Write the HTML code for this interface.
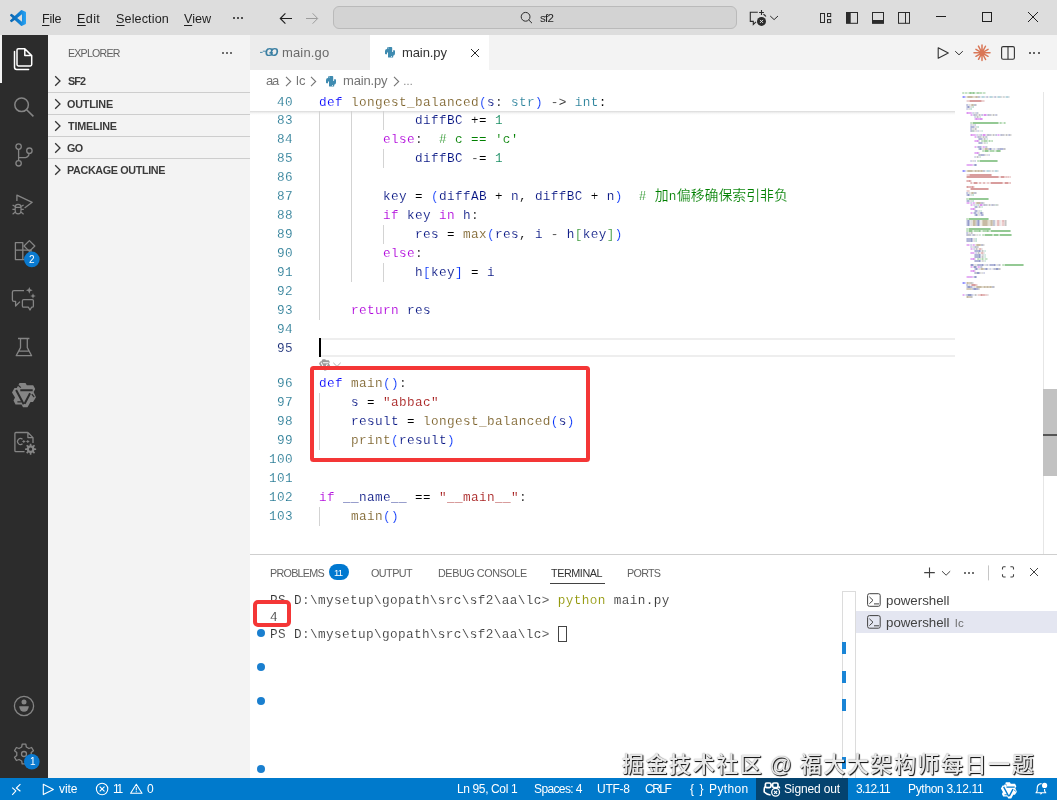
<!DOCTYPE html>
<html lang="zh">
<head>
<meta charset="utf-8">
<title>main.py - sf2 - Visual Studio Code</title>
<style>
*{box-sizing:border-box;margin:0;padding:0}
html,body{width:1057px;height:800px;overflow:hidden;background:#fff}
body{position:relative;font-family:"Liberation Sans","Noto Sans CJK SC",sans-serif;font-size:13px;color:#333}
.abs{position:absolute}
svg{position:absolute;overflow:visible}
.tx{position:absolute;white-space:pre}
.tl,.tx,.cl,#wm{will-change:transform}
.tx u{text-decoration-thickness:1px;text-underline-offset:1.5px}
#titlebar{left:0;top:0;width:1057px;height:35px;background:#dddddd}
#search{left:333px;top:6px;width:404px;height:23px;background:#d3d3d3;border:1px solid #bababa;border-radius:6px}
#activity{left:0;top:35px;width:48px;height:743px;background:#2c2c2c}
#sidebar{left:48px;top:35px;width:202px;height:743px;background:#f3f3f3}
.sep{position:absolute;left:48px;width:202px;height:1px;background:#cdcdcd}
#tabs{left:250px;top:35px;width:807px;height:35px;background:#f3f3f3}
#editor{left:250px;top:70px;width:807px;height:484px;background:#fff}
.cl{position:absolute;left:0;width:710px;height:19px;line-height:19px;font-family:"Liberation Mono","Noto Sans CJK SC",monospace;font-size:12.7px;letter-spacing:0.38px;white-space:pre;color:#000}
.cj{font-size:13.9px;letter-spacing:0}
.cl,.tl{-webkit-text-stroke:0.14px #fff;paint-order:fill stroke}
.ln{position:absolute;left:0;width:43px;text-align:right;color:#237893}
.ln.cur{color:#0b216f}
.cd{position:absolute;left:69px}
.k{color:#0000ff}.f{color:#795e26}.v{color:#001080}.t{color:#267f99}.c{color:#af00db}.n{color:#098658}.m{color:#008000}.s{color:#a31515}
.b1{color:#0431fa}.b2{color:#319331}.b3{color:#7b3814}
.ig{position:absolute;width:1px;background:#d3d3d3}
.red{position:absolute;border:4px solid #f43636;border-radius:3.5px}
#panel{left:250px;top:554px;width:807px;height:224px;background:#fff;border-top:1px solid #cfcfcf}
.tl{position:absolute;left:270px;height:17px;line-height:17px;font-family:"Liberation Mono",monospace;font-size:12.7px;letter-spacing:0.38px;white-space:pre;color:#333}
.dot{position:absolute;width:8px;height:8px;border-radius:50%;background:#1a7fcf}
.mark{position:absolute;left:842px;width:4px;height:12px;background:#1a85d6}
#status{left:0;top:778px;width:1057px;height:22px;background:#007acc}
.badge{position:absolute;background:#007acc;color:#fff;border-radius:50%;text-align:center;font-size:9px;font-weight:bold}
#wm{position:absolute;white-space:pre;color:#e9e9e9;font-family:"Liberation Sans","Noto Sans CJK SC",sans-serif;font-weight:500;text-shadow:1px 1px 1px rgba(0,0,0,0.85),0.5px 0.5px 0.5px rgba(0,0,0,0.5),0 0 1.2px rgba(0,0,0,0.45)}
</style>
</head>
<body>
<div id="titlebar" class="abs"></div>
<div id="search" class="abs"></div>
<span class="tx" style="left:42.27px;top:11.00px;font-size:12.6px;line-height:16px;letter-spacing:-0.303px;color:#1f1f1f;"><u>F</u>ile</span>
<span class="tx" style="left:77.17px;top:11.00px;font-size:12.6px;line-height:16px;letter-spacing:0.371px;color:#1f1f1f;"><u>E</u>dit</span>
<span class="tx" style="left:115.53px;top:11.00px;font-size:12.6px;line-height:16px;letter-spacing:0.120px;color:#1f1f1f;"><u>S</u>election</span>
<span class="tx" style="left:183.74px;top:11.00px;font-size:12.6px;line-height:16px;letter-spacing:-0.029px;color:#1f1f1f;"><u>V</u>iew</span>
<span class="tx" style="left:539.78px;top:10.00px;font-size:11.6px;line-height:16px;letter-spacing:-0.734px;color:#1f1f1f;">sf2</span>
<svg style="left:10px;top:10px" width="16" height="16" viewBox="0 0 100 100"><defs><linearGradient id="vsg" x1="0" x2="1" y1="0" y2="0"><stop offset="0" stop-color="#0b66b0"/><stop offset="0.55" stop-color="#0f7dd0"/><stop offset="1" stop-color="#2aa4f4"/></linearGradient></defs><path fill="url(#vsg)" fill-rule="evenodd" d="M96.46 10.8 75.86.88a6.23 6.23 0 0 0-7.1 1.2L29.35 38.04 12.18 25.01a4.16 4.16 0 0 0-5.32.24l-5.5 5.01a4.17 4.17 0 0 0 0 6.16L16.25 50 1.36 63.58a4.17 4.17 0 0 0 0 6.16l5.5 5.01a4.16 4.16 0 0 0 5.32.24l17.17-13.03 39.42 35.96a6.23 6.23 0 0 0 7.1 1.2l20.6-9.9A6.25 6.25 0 0 0 100 83.58V16.42a6.25 6.25 0 0 0-3.54-5.62zM75.02 72.7 45.11 50l29.91-22.7z"/></svg>
<svg style="left:0;top:0" width="1057" height="35" viewBox="0 0 1057 35" fill="none" stroke-linecap="butt">
<path d="M292 18.5H280.6M285.4 13.3 280.3 18.5 285.4 23.7" stroke="#1f1f1f" stroke-width="1.15"/>
<path d="M306 18.5H317.4M312.6 13.3 317.7 18.5 312.6 23.7" stroke="#9c9c9c" stroke-width="1"/>
<circle cx="525.6" cy="16.8" r="4.4" stroke="#2b2b2b" stroke-width="1"/><path d="M528.7 19.9 532 23.2" stroke="#2b2b2b" stroke-width="1"/>
<path d="M757.8 12.2H750.3V21.4H753.3V24.4L756 21.9" stroke="#2b2b2b" stroke-width="1.1"/>
<path d="M759.1 12.5H763.9M761.5 10.1V14.9" stroke="#2b2b2b" stroke-width="1.1"/>
<path d="M763.4 14.2Q765 15 765.9 16.6" stroke="#2b2b2b" stroke-width="1.1"/>
<circle cx="761.5" cy="21.4" r="4.5" fill="#2b2b2b"/><path d="M760 19.9 763 22.9M763 19.9 760 22.9" stroke="#e6e6e6" stroke-width="1"/>
<path d="M770.2 16 774.1 19.6 778 16" stroke="#2b2b2b" stroke-width="1"/>
<rect x="820.5" y="13.5" width="4" height="9" stroke="#2b2b2b"/><rect x="827.5" y="13.5" width="3.2" height="3" stroke="#2b2b2b"/><rect x="827.5" y="19.6" width="3.2" height="3" stroke="#2b2b2b"/>
<rect x="846.5" y="12.5" width="11" height="10.8" stroke="#2b2b2b"/><rect x="846.5" y="12.5" width="4.2" height="10.8" fill="#2b2b2b" stroke="none"/>
<rect x="872.5" y="12.5" width="11" height="10.8" stroke="#2b2b2b"/><rect x="872.5" y="20" width="11" height="3.4" fill="#2b2b2b" stroke="none"/>
<rect x="898.5" y="12.5" width="11" height="10.8" stroke="#2b2b2b"/><path d="M905.5 12.5V23.3" stroke="#2b2b2b"/>
<path d="M936 16.5H946" stroke="#1f1f1f" stroke-width="1"/>
<rect x="982.5" y="12.5" width="9" height="9" stroke="#1f1f1f" stroke-width="1"/>
<path d="M1028 12 1038 22M1038 12 1028 22" stroke="#1f1f1f" stroke-width="1"/>
</svg>
<div id="activity" class="abs"></div>
<div class="abs" style="left:0;top:35px;width:2px;height:48px;background:#f2f2f2"></div>
<svg style="left:0;top:0" width="48" height="778" viewBox="0 0 48 778" fill="none" stroke-linejoin="round">
<path d="M24.8 48.7H18.4Q17 48.7 17 50.1V64.6Q17 66 18.4 66H30.3Q31.7 66 31.7 64.6V55.6ZM24.8 48.7V55.6H31.7" stroke="#fff" stroke-width="1.5"/>
<path d="M14.5 51.5V67.3Q14.5 69.5 16.7 69.5H28.6" stroke="#fff" stroke-width="1.5" stroke-linecap="round"/>
<circle cx="21.6" cy="104.8" r="6.8" stroke="#858585" stroke-width="1.5"/><path d="M26.6 109.8 33.4 116.4" stroke="#858585" stroke-width="1.6"/>
<circle cx="18.6" cy="146.6" r="2.7" stroke="#858585" stroke-width="1.3"/><circle cx="18.6" cy="163.3" r="2.7" stroke="#858585" stroke-width="1.3"/><circle cx="29.4" cy="150.7" r="2.7" stroke="#858585" stroke-width="1.3"/>
<path d="M18.6 149.3V160.6M18.6 157.6H25.5Q28.6 157.2 29.2 153.4" stroke="#858585" stroke-width="1.3"/>
<path d="M16.9 201V195.2L32.2 202.3 24.6 208" stroke="#858585" stroke-width="1.3"/>
<path d="M15.2 207.2Q15.2 204.4 18.1 204.4Q21 204.4 21 207.2V210.7Q21 213.8 18.1 213.8Q15.2 213.8 15.2 210.7ZM15.2 207.4H21M12.4 209.3H15.2M21 209.3H23.8M12.6 204.9 15.2 206.6M23.6 204.9 21 206.6M12.6 214.2 15.3 212M23.6 214.2 20.9 212" stroke="#858585" stroke-width="1.2"/>
<path d="M15.4 242.6H22.8V250.2H15.4ZM15.4 250.2V259.6H22.8V250.2M22.8 250.2H31V259.6H22.8" stroke="#858585" stroke-width="1.3"/>
<path d="M29.4 240.6 34.8 246 29.4 251.4 24 246Z" stroke="#858585" stroke-width="1.3"/>
<circle cx="31.8" cy="259.4" r="7.8" fill="#0a7ad0" stroke="none"/>
<path d="M24 290.6H14Q12.4 290.6 12.4 292.2V299.8Q12.4 301.4 14 301.4H15.6V306L20 301.6" stroke="#858585" stroke-width="1.3"/>
<path d="M23.6 299.6H32.2Q33.4 299.6 33.4 300.8V306Q33.4 307.2 32.2 307.2H31.6L30 310 28.4 307.2H23.6Q22.4 307.2 22.4 306V300.8Q22.4 299.6 23.6 299.6Z" stroke="#858585" stroke-width="1.3"/>
<path d="M29.3 286.90000000000003L30.252000000000002 289.348 32.7 290.3 30.252000000000002 291.252 29.3 293.7 28.348 291.252 25.900000000000002 290.3 28.348 289.348ZM33 293.2L33.784 295.216 35.8 296 33.784 296.784 33 298.8 32.216 296.784 30.2 296 32.216 295.216Z" fill="#858585" stroke="none"/>
<path d="M18 338.5H29.4M20.5 338.5V347.6L16.2 355.7H31.6L27.3 347.6V338.5M18.4 351.2H29.4" stroke="#858585" stroke-width="1.3"/>
<path d="M19.5 382.9H25.5L26.8 385.3H33.2L35.2 389 33.6 392 36 397.2 33 402H30.5L27.5 407.3H23L21.5 404.5H15.5L13.5 400.6 15 397.6 12 392.5 14.5 388H16.8Z" fill="#858585" stroke="none" stroke-linejoin="round"/>
<path d="M20.3 390.3H32.7M16.1 390 23.7 404.2M30.1 393.3 24.6 403.8" stroke="#2c2c2c" stroke-width="2"/>
<path d="M18.2 385.2 20.8 387.6M31.8 394.2 34.2 397M17.4 401.8H21.6" stroke="#2c2c2c" stroke-width="1.2"/>
<path d="M27.9 432.5H15.9Q14.9 432.5 14.9 433.5V450.7Q14.9 451.7 15.9 451.7H24.5M27.9 432.5 33 437.6V443M27.9 432.5V437.6H33" stroke="#858585" stroke-width="1.3"/>
<path d="M22.5 439.2A3 3 0 1 0 22.5 443.8" stroke="#858585" stroke-width="1.2"/><path d="M22.3 441.5H25.3M23.8 440V443M26.3 441.5H29.3M27.8 440V443" stroke="#858585" stroke-width="0.9"/>
<path fill-rule="evenodd" d="M36.15 448.43L36.15 449.97L34.39 450.11L33.93 451.24L35.06 452.58L33.98 453.66L32.64 452.53L31.51 452.99L31.37 454.75L29.83 454.75L29.69 452.99L28.56 452.53L27.22 453.66L26.14 452.58L27.27 451.24L26.81 450.11L25.05 449.97L25.05 448.43L26.81 448.29L27.27 447.16L26.14 445.82L27.22 444.74L28.56 445.87L29.69 445.41L29.83 443.65L31.37 443.65L31.51 445.41L32.64 445.87L33.98 444.74L35.06 445.82L33.93 447.16L34.39 448.29ZM32.2 449.2A1.6 1.6 0 1 0 29 449.2A1.6 1.6 0 1 0 32.2 449.2Z" fill="#858585" stroke="none"/>
<circle cx="24" cy="706" r="9.6" stroke="#858585" stroke-width="1.3"/><circle cx="24" cy="702" r="2.5" fill="#858585"/><path d="M19.2 706.2H28.8A4.8 5.6 0 0 1 19.2 706.2Z" fill="#858585"/>
<path d="M33.43 757.34L31.60 760.49L28.95 759.50L26.29 761.04L25.82 763.83L22.18 763.83L21.71 761.04L19.05 759.50L16.40 760.49L14.57 757.34L16.76 755.54L16.76 752.46L14.57 750.66L16.40 747.51L19.05 748.50L21.71 746.96L22.18 744.17L25.82 744.17L26.29 746.96L28.95 748.50L31.60 747.51L33.43 750.66L31.24 752.46L31.24 755.54Z" stroke="#858585" stroke-width="1.3" stroke-linejoin="round"/><circle cx="24" cy="754" r="2.5" stroke="#858585" stroke-width="1.3"/>
<circle cx="31.8" cy="761.8" r="7.8" fill="#0a7ad0" stroke="none"/>
</svg>
<span class="tx" style="left:29.00px;top:252.00px;font-size:10px;line-height:16px;color:#fff;">2</span>
<span class="tx" style="left:29.54px;top:754.00px;font-size:10px;line-height:16px;color:#fff;">1</span>
<div id="sidebar" class="abs"></div>
<span class="tx" style="left:67.63px;top:45.00px;font-size:10.6px;line-height:16px;letter-spacing:-0.767px;color:#616161;">EXPLORER</span>
<span class="tx" style="left:67.59px;top:73.00px;font-size:10.8px;line-height:16px;letter-spacing:-0.882px;color:#3b3b3b;font-weight:700;">SF2</span>
<svg style="left:54px;top:75.4px" width="8" height="12" viewBox="0 0 8 12"><path d="M1.2 1.2 L6 6 L1.2 10.8" fill="none" stroke="#333" stroke-width="1.3"/></svg>
<span class="tx" style="left:67.46px;top:96.00px;font-size:10.8px;line-height:16px;letter-spacing:-0.205px;color:#3b3b3b;font-weight:700;">OUTLINE</span>
<svg style="left:54px;top:98.4px" width="8" height="12" viewBox="0 0 8 12"><path d="M1.2 1.2 L6 6 L1.2 10.8" fill="none" stroke="#333" stroke-width="1.3"/></svg>
<span class="tx" style="left:68.38px;top:118.00px;font-size:10.8px;line-height:16px;letter-spacing:-0.194px;color:#3b3b3b;font-weight:700;">TIMELINE</span>
<svg style="left:54px;top:120.4px" width="8" height="12" viewBox="0 0 8 12"><path d="M1.2 1.2 L6 6 L1.2 10.8" fill="none" stroke="#333" stroke-width="1.3"/></svg>
<span class="tx" style="left:67.46px;top:140.00px;font-size:10.8px;line-height:16px;letter-spacing:-0.605px;color:#3b3b3b;font-weight:700;">GO</span>
<svg style="left:54px;top:142.4px" width="8" height="12" viewBox="0 0 8 12"><path d="M1.2 1.2 L6 6 L1.2 10.8" fill="none" stroke="#333" stroke-width="1.3"/></svg>
<span class="tx" style="left:67.18px;top:162.00px;font-size:10.8px;line-height:16px;letter-spacing:-0.369px;color:#3b3b3b;font-weight:700;">PACKAGE OUTLINE</span>
<svg style="left:54px;top:164.4px" width="8" height="12" viewBox="0 0 8 12"><path d="M1.2 1.2 L6 6 L1.2 10.8" fill="none" stroke="#333" stroke-width="1.3"/></svg>
<div class="sep" style="top:92px"></div>
<div class="sep" style="top:114px"></div>
<div class="sep" style="top:136px"></div>
<div class="sep" style="top:158px"></div>
<div class="abs" style="left:221.90px;top:52.30px;width:2.0px;height:2.0px;border-radius:50%;background:#424242"></div><div class="abs" style="left:225.85px;top:52.30px;width:2.0px;height:2.0px;border-radius:50%;background:#424242"></div><div class="abs" style="left:229.80px;top:52.30px;width:2.0px;height:2.0px;border-radius:50%;background:#424242"></div>
<div class="abs" style="left:232.90px;top:17.00px;width:2.0px;height:2.0px;border-radius:50%;background:#1f1f1f"></div><div class="abs" style="left:237.15px;top:17.00px;width:2.0px;height:2.0px;border-radius:50%;background:#1f1f1f"></div><div class="abs" style="left:241.40px;top:17.00px;width:2.0px;height:2.0px;border-radius:50%;background:#1f1f1f"></div>
<div id="tabs" class="abs"></div>
<div class="abs" style="left:250px;top:35px;width:120px;height:35px;background:#ececec"></div>
<div class="abs" style="left:370px;top:35px;width:119px;height:35px;background:#fff"></div>
<span class="tx" style="left:281.74px;top:45.00px;font-size:13px;line-height:16px;letter-spacing:0.143px;color:#6a6a6a;">main.go</span>
<span class="tx" style="left:401.74px;top:45.00px;font-size:13px;line-height:16px;letter-spacing:-0.105px;color:#333;">main.py</span>
<svg style="left:385px;top:47px" width="10.0" height="10.75" viewBox="385 47 10 10.75"><path d="M387.6 47H391.4Q392.2 47 392.2 47.8V52H393.1V50.2H394.4Q395 50.2 395 50.8V53.6Q395 55.6 393.2 55.7V56.9Q393.2 57.6 392.5 57.6H388.7Q388 57.6 388 56.9V52.6H387V54.2H385.6Q385 54.2 385 53.6V51Q385 49.2 387 49Z" fill="#3f8bb0"/><circle cx="391.5" cy="56.5" r="0.5" fill="#fff"/><circle cx="388.6" cy="48" r="0.45" fill="#fff"/></svg>
<span class="tx" style="left:265.47px;top:44.00px;font-size:10.6px;line-height:16px;letter-spacing:-3.310px;color:#3a7fa3;font-weight:700;font-style:italic;-webkit-text-stroke:0.12px #3a7fa3;">GO</span>
<svg style="left:0;top:35px" width="1057" height="35" viewBox="0 35 1057 35" fill="none">
<path d="M260 52.4H262.6M262.8 51.2H266.2" stroke="#3a7fa3" stroke-width="0.9"/>
<path d="M471 49 479 57M479 49 471 57" stroke="#2a2a2a" stroke-width="1"/>
<path d="M938.2 47.7V58.3L948.3 53Z" stroke="#333" stroke-width="1.1" stroke-linejoin="round"/>
<path d="M955.2 51.2 959 54.8 962.8 51.2" stroke="#333" stroke-width="1"/>
<path d="M983.00 52.80L990.00 52.80M982.87 53.30L988.06 56.30M982.47 53.68L985.57 59.51M982.00 53.80L982.00 60.60M981.53 53.68L978.53 59.33M981.13 53.30L975.94 56.30M981.00 52.80L974.00 52.80M981.13 52.30L975.94 49.30M981.53 51.92L978.43 46.09M982.00 51.80L982.00 45.00M982.47 51.92L985.47 46.27M982.87 52.30L988.06 49.30" stroke="#d97757" stroke-width="1.5" stroke-linecap="round"/><circle cx="982" cy="52.8" r="2" fill="#d97757"/>
<rect x="1001.6" y="46.6" width="12.8" height="12.6" rx="1.5" stroke="#333" stroke-width="1.1"/><path d="M1008 46.6V59.2" stroke="#333" stroke-width="1.1"/>
</svg>
<div class="abs" style="left:1028.50px;top:51.95px;width:2.1px;height:2.1px;border-radius:50%;background:#333"></div><div class="abs" style="left:1033.05px;top:51.95px;width:2.1px;height:2.1px;border-radius:50%;background:#333"></div><div class="abs" style="left:1037.60px;top:51.95px;width:2.1px;height:2.1px;border-radius:50%;background:#333"></div>
<div id="editor" class="abs">
</div>
<span class="tx" style="left:266.15px;top:73.00px;font-size:13px;line-height:16px;letter-spacing:-1.208px;color:#757575;">aa</span>
<span class="tx" style="left:295.92px;top:73.00px;font-size:13px;line-height:16px;letter-spacing:0.031px;color:#757575;">lc</span>
<span class="tx" style="left:342.84px;top:73.00px;font-size:13px;line-height:16px;letter-spacing:-0.155px;color:#757575;">main.py</span>
<svg style="left:285.4px;top:75.5px" width="7" height="11" viewBox="0 0 7 11"><path d="M1 0.8 L5.7 5.5 L1 10.2" fill="none" stroke="#757575" stroke-width="1.1"/></svg>
<svg style="left:310px;top:75.5px" width="7" height="11" viewBox="0 0 7 11"><path d="M1 0.8 L5.7 5.5 L1 10.2" fill="none" stroke="#757575" stroke-width="1.1"/></svg>
<svg style="left:392.9px;top:75.5px" width="7" height="11" viewBox="0 0 7 11"><path d="M1 0.8 L5.7 5.5 L1 10.2" fill="none" stroke="#757575" stroke-width="1.1"/></svg>
<span class="tx" style="left:403.34px;top:74.00px;font-size:10px;line-height:16px;color:#757575;">…</span>
<svg style="left:326px;top:76.3px" width="10.0" height="10.75" viewBox="385 47 10 10.75"><path d="M387.6 47H391.4Q392.2 47 392.2 47.8V52H393.1V50.2H394.4Q395 50.2 395 50.8V53.6Q395 55.6 393.2 55.7V56.9Q393.2 57.6 392.5 57.6H388.7Q388 57.6 388 56.9V52.6H387V54.2H385.6Q385 54.2 385 53.6V51Q385 49.2 387 49Z" fill="#3f8bb0"/><circle cx="391.5" cy="56.5" r="0.5" fill="#fff"/><circle cx="388.6" cy="48" r="0.45" fill="#fff"/></svg>
<div id="code" class="abs" style="left:250px;top:70.7px;width:710px;height:484px">
<div class="cl" style="top:22px"><span class="ln">40</span><span class="cd"><span class="k">def</span> <span class="f">longest_balanced</span><span class="b1">(</span><span class="v">s</span>: <span class="t">str</span><span class="b1">)</span> -&gt; <span class="t">int</span>:</span></div>
<div class="abs" style="left:0;top:40.3px;width:705px;height:4px;background:linear-gradient(#d9d9d9,#f4f4f4 50%,#fff)"></div>
<div class="abs" style="left:69px;top:267.3px;width:636px;height:19px;border-top:2px solid #eeeeee;border-bottom:2px solid #eeeeee"></div>
<div class="abs" style="left:69px;top:267.3px;width:2px;height:19px;background:#000"></div>
<div class="cl" style="top:40px"><span class="ln">83</span><i class="ig" style="left:69px;top:0;height:19px"></i><i class="ig" style="left:101px;top:0;height:19px"></i><i class="ig" style="left:133px;top:0;height:19px"></i><span class="cd">            <span class="v">diffBC</span> += <span class="n">1</span></span></div>
<div class="cl" style="top:59px"><span class="ln">84</span><i class="ig" style="left:69px;top:0;height:19px"></i><i class="ig" style="left:101px;top:0;height:19px"></i><span class="cd">        <span class="c">else</span>:  <span class="m"># c == &#x27;c&#x27;</span></span></div>
<div class="cl" style="top:78px"><span class="ln">85</span><i class="ig" style="left:69px;top:0;height:19px"></i><i class="ig" style="left:101px;top:0;height:19px"></i><i class="ig" style="left:133px;top:0;height:19px"></i><span class="cd">            <span class="v">diffBC</span> -= <span class="n">1</span></span></div>
<div class="cl" style="top:97px"><span class="ln">86</span><i class="ig" style="left:69px;top:0;height:19px"></i><i class="ig" style="left:101px;top:0;height:19px"></i><span class="cd"></span></div>
<div class="cl" style="top:116px"><span class="ln">87</span><i class="ig" style="left:69px;top:0;height:19px"></i><i class="ig" style="left:101px;top:0;height:19px"></i><span class="cd">        <span class="v">key</span> = <span class="b1">(</span><span class="v">diffAB</span> + <span class="v">n</span>, <span class="v">diffBC</span> + <span class="v">n</span><span class="b1">)</span>  <span class="m"># <span class="cj">加</span>n<span class="cj">偏移确保索引非负</span></span></span></div>
<div class="cl" style="top:135px"><span class="ln">88</span><i class="ig" style="left:69px;top:0;height:19px"></i><i class="ig" style="left:101px;top:0;height:19px"></i><span class="cd">        <span class="c">if</span> <span class="v">key</span> <span class="c">in</span> <span class="v">h</span>:</span></div>
<div class="cl" style="top:154px"><span class="ln">89</span><i class="ig" style="left:69px;top:0;height:19px"></i><i class="ig" style="left:101px;top:0;height:19px"></i><i class="ig" style="left:133px;top:0;height:19px"></i><span class="cd">            <span class="v">res</span> = <span class="f">max</span><span class="b1">(</span><span class="v">res</span>, <span class="v">i</span> - <span class="v">h</span><span class="b2">[</span><span class="v">key</span><span class="b2">]</span><span class="b1">)</span></span></div>
<div class="cl" style="top:173px"><span class="ln">90</span><i class="ig" style="left:69px;top:0;height:19px"></i><i class="ig" style="left:101px;top:0;height:19px"></i><span class="cd">        <span class="c">else</span>:</span></div>
<div class="cl" style="top:192px"><span class="ln">91</span><i class="ig" style="left:69px;top:0;height:19px"></i><i class="ig" style="left:101px;top:0;height:19px"></i><i class="ig" style="left:133px;top:0;height:19px"></i><span class="cd">            <span class="v">h</span><span class="b1">[</span><span class="v">key</span><span class="b1">]</span> = <span class="v">i</span></span></div>
<div class="cl" style="top:211px"><span class="ln">92</span><i class="ig" style="left:69px;top:0;height:19px"></i><span class="cd"></span></div>
<div class="cl" style="top:230px"><span class="ln">93</span><i class="ig" style="left:69px;top:0;height:19px"></i><span class="cd">    <span class="c">return</span> <span class="v">res</span></span></div>
<div class="cl" style="top:249px"><span class="ln">94</span><span class="cd"></span></div>
<div class="cl" style="top:268px"><span class="ln cur">95</span><span class="cd"></span></div>
<div class="cl" style="top:303px"><span class="ln">96</span><span class="cd"><span class="k">def</span> <span class="f">main</span><span class="b1">()</span>:</span></div>
<div class="cl" style="top:322px"><span class="ln">97</span><i class="ig" style="left:69px;top:0;height:19px"></i><span class="cd">    <span class="v">s</span> = <span class="s">&quot;abbac&quot;</span></span></div>
<div class="cl" style="top:341px"><span class="ln">98</span><i class="ig" style="left:69px;top:0;height:19px"></i><span class="cd">    <span class="v">result</span> = <span class="f">longest_balanced</span><span class="b1">(</span><span class="v">s</span><span class="b1">)</span></span></div>
<div class="cl" style="top:360px"><span class="ln">99</span><i class="ig" style="left:69px;top:0;height:19px"></i><span class="cd">    <span class="f">print</span><span class="b1">(</span><span class="v">result</span><span class="b1">)</span></span></div>
<div class="cl" style="top:379px"><span class="ln">100</span><span class="cd"></span></div>
<div class="cl" style="top:398px"><span class="ln">101</span><span class="cd"></span></div>
<div class="cl" style="top:417px"><span class="ln">102</span><span class="cd"><span class="c">if</span> <span class="v">__name__</span> == <span class="s">&quot;__main__&quot;</span>:</span></div>
<div class="cl" style="top:436px"><span class="ln">103</span><i class="ig" style="left:69px;top:0;height:19px"></i><span class="cd">    <span class="f">main</span><span class="b1">()</span></span></div>

</div>
<svg style="left:310px;top:355px" width="40" height="20" viewBox="310 355 40 20" fill="none"><g transform="translate(324.6 364.8) scale(0.46) translate(-24 -395)"><path d="M19.5 382.9H25.5L26.8 385.3H33.2L35.2 389 33.6 392 36 397.2 33 402H30.5L27.5 407.3H23L21.5 404.5H15.5L13.5 400.6 15 397.6 12 392.5 14.5 388H16.8Z" fill="#9b9b9b"/><path d="M20.3 390.3H32.7M16.1 390 23.7 404.2M30.1 393.3 24.6 403.8" stroke="#fff" stroke-width="2.2"/></g><path d="M333.3 362.8 337 366.4 340.7 362.8" stroke="#a5a5a5" stroke-width="0.9"/></svg>
<div class="red" style="left:310px;top:366px;width:280px;height:96px"></div>
<svg style="left:0;top:0" width="1057" height="560" viewBox="0 0 1057 560" fill="none">
<path d="M964.6 97h0.9M964.6 171h0.9M964.6 283h0.9" stroke="#8c8cff" stroke-width="1.7"/>
<path d="M962.6 97h0.9M963.6 97h0.9M962.6 171h0.9M963.6 171h0.9M962.6 283h0.9M963.6 283h0.9" stroke="#6161ff" stroke-width="1.7"/>
<path d="M965.6 295h0.9M966.6 295h0.9M971.6 295h0.9M972.6 295h0.9" stroke="#b8bcdb" stroke-width="1.7"/>
<path d="M966.6 107h0.9M966.6 109h0.9M972.6 113h0.9M975.6 115h0.9M989.6 115h0.9M974.6 117h0.9M970.6 125h0.9M974.6 125h0.9M971.6 127h0.9M972.6 127h0.9M973.6 127h0.9M977.6 131h0.9M976.6 135h0.9M989.6 135h0.9M1002.6 135h0.9M979.6 137h0.9M979.6 139h0.9M980.6 139h0.9M981.6 139h0.9M979.6 143h0.9M980.6 143h0.9M981.6 143h0.9M978.6 147h0.9M979.6 147h0.9M980.6 147h0.9M978.6 149h0.9M988.6 149h0.9M993.6 149h0.9M1000.6 149h0.9M1001.6 149h0.9M1002.6 149h0.9M981.6 155h0.9M982.6 155h0.9M983.6 155h0.9M988.6 155h0.9M974.6 157h0.9M970.6 161h0.9M974.6 161h0.9M973.6 165h0.9M966.6 195h0.9M966.6 201h0.9M968.6 201h0.9M970.6 203h0.9M973.6 205h0.9M985.6 205h0.9M993.6 205h0.9M974.6 207h0.9M976.6 207h0.9M974.6 211h0.9M976.6 211h0.9M973.6 213h0.9M975.6 213h0.9M979.6 213h0.9M974.6 215h0.9M980.6 215h0.9M982.6 215h0.9M966.6 221h0.9M976.6 221h0.9M966.6 223h0.9M976.6 223h0.9M966.6 225h0.9M976.6 225h0.9M967.6 239h0.9M968.6 239h0.9M969.6 239h0.9M967.6 241h0.9M968.6 241h0.9M969.6 241h0.9M970.6 245h0.9M970.6 247h0.9M976.6 247h0.9M973.6 249h0.9M975.6 251h0.9M976.6 251h0.9M977.6 251h0.9M975.6 253h0.9M975.6 255h0.9M976.6 255h0.9M977.6 255h0.9M975.6 257h0.9M976.6 257h0.9M977.6 257h0.9M975.6 261h0.9M976.6 261h0.9M977.6 261h0.9M978.6 265h0.9M979.6 265h0.9M980.6 265h0.9M990.6 265h0.9M991.6 265h0.9M992.6 265h0.9M974.6 269h0.9M984.6 269h0.9M989.6 269h0.9M983.6 273h0.9M973.6 277h0.9M966.6 287h0.9M970.6 287h0.9M971.6 287h0.9M972.6 289h0.9M976.6 289h0.9M977.6 289h0.9" stroke="#8c93c6" stroke-width="1.7"/>
<path d="M978.6 97h0.9M986.6 97h0.9M994.6 97h0.9M966.6 105h0.9M974.6 105h0.9M967.6 107h0.9M968.6 107h0.9M976.6 113h0.9M973.6 115h0.9M981.6 115h0.9M987.6 115h0.9M995.6 115h0.9M970.6 127h0.9M970.6 129h0.9M970.6 131h0.9M980.6 135h0.9M987.6 135h0.9M995.6 135h0.9M1000.6 135h0.9M1008.6 135h0.9M977.6 137h0.9M985.6 137h0.9M978.6 139h0.9M978.6 143h0.9M977.6 147h0.9M985.6 147h0.9M979.6 149h0.9M980.6 149h0.9M989.6 149h0.9M990.6 149h0.9M997.6 149h0.9M999.6 149h0.9M978.6 155h0.9M980.6 155h0.9M974.6 165h0.9M975.6 165h0.9M983.6 171h0.9M966.6 193h0.9M974.6 193h0.9M967.6 195h0.9M968.6 195h0.9M967.6 201h0.9M981.6 203h0.9M983.6 205h0.9M991.6 205h0.9M975.6 207h0.9M975.6 211h0.9M974.6 213h0.9M980.6 213h0.9M981.6 213h0.9M975.6 215h0.9M976.6 215h0.9M981.6 215h0.9M967.6 221h0.9M968.6 221h0.9M977.6 221h0.9M978.6 221h0.9M993.6 221h0.9M967.6 223h0.9M968.6 223h0.9M977.6 223h0.9M978.6 223h0.9M993.6 223h0.9M967.6 225h0.9M968.6 225h0.9M977.6 225h0.9M978.6 225h0.9M993.6 225h0.9M966.6 233h0.9M966.6 235h0.9M969.6 235h0.9M972.6 235h0.9M966.6 239h0.9M970.6 239h0.9M971.6 239h0.9M966.6 241h0.9M970.6 241h0.9M971.6 241h0.9M981.6 245h0.9M974.6 247h0.9M974.6 251h0.9M978.6 251h0.9M979.6 251h0.9M974.6 255h0.9M978.6 255h0.9M979.6 255h0.9M974.6 257h0.9M978.6 257h0.9M979.6 257h0.9M974.6 261h0.9M978.6 261h0.9M979.6 261h0.9M970.6 265h0.9M971.6 265h0.9M972.6 265h0.9M977.6 265h0.9M981.6 265h0.9M982.6 265h0.9M986.6 265h0.9M989.6 265h0.9M993.6 265h0.9M994.6 265h0.9M998.6 265h0.9M973.6 267h0.9M974.6 267h0.9M975.6 267h0.9M980.6 267h0.9M975.6 269h0.9M976.6 269h0.9M985.6 269h0.9M986.6 269h0.9M993.6 269h0.9M995.6 269h0.9M996.6 269h0.9M997.6 269h0.9M974.6 273h0.9M976.6 273h0.9M977.6 273h0.9M978.6 273h0.9M974.6 277h0.9M975.6 277h0.9M966.6 285h0.9M967.6 287h0.9M968.6 287h0.9M969.6 287h0.9M992.6 287h0.9M973.6 289h0.9M974.6 289h0.9M975.6 289h0.9M967.6 295h0.9M968.6 295h0.9M969.6 295h0.9M970.6 295h0.9" stroke="#616bb0" stroke-width="1.7"/>
<path d="M964.6 93h0.9M966.6 93h0.9M974.6 93h0.9M979.6 93h0.9M982.6 93h0.9M984.6 93h0.9M1001.6 123h0.9M980.6 231h0.9M984.6 259h0.9M986.6 259h0.9" stroke="#b8dbb8" stroke-width="1.7"/>
<path d="M965.6 93h0.9M968.6 93h0.9M971.6 93h0.9M977.6 93h0.9M978.6 93h0.9M983.6 93h0.9M999.6 123h0.9M1000.6 123h0.9M1003.6 123h0.9M1004.6 123h0.9M984.6 141h0.9M985.6 141h0.9M986.6 141h0.9M988.6 141h0.9M989.6 141h0.9M989.6 151h0.9M990.6 151h0.9M991.6 151h0.9M993.6 151h0.9M995.6 151h0.9M973.6 231h0.9M975.6 231h0.9M976.6 231h0.9M977.6 231h0.9M983.6 231h0.9M984.6 231h0.9M985.6 231h0.9M988.6 231h0.9M979.6 259h0.9M981.6 259h0.9M982.6 259h0.9M985.6 259h0.9" stroke="#8cc68c" stroke-width="1.7"/>
<path d="M962.6 93h0.9M969.6 93h0.9M970.6 93h0.9M972.6 93h0.9M973.6 93h0.9M976.6 93h0.9M980.6 93h0.9M970.6 123h0.9M972.6 123h0.9M973.6 123h0.9M974.6 123h0.9M975.6 123h0.9M976.6 123h0.9M977.6 123h0.9M978.6 123h0.9M979.6 123h0.9M980.6 123h0.9M981.6 123h0.9M982.6 123h0.9M983.6 123h0.9M984.6 123h0.9M985.6 123h0.9M986.6 123h0.9M987.6 123h0.9M988.6 123h0.9M989.6 123h0.9M990.6 123h0.9M991.6 123h0.9M992.6 123h0.9M993.6 123h0.9M994.6 123h0.9M995.6 123h0.9M996.6 123h0.9M997.6 123h0.9M981.6 141h0.9M983.6 141h0.9M991.6 141h0.9M982.6 151h0.9M984.6 151h0.9M985.6 151h0.9M986.6 151h0.9M987.6 151h0.9M992.6 151h0.9M996.6 151h0.9M997.6 151h0.9M998.6 151h0.9M999.6 151h0.9M977.6 161h0.9M979.6 161h0.9M980.6 161h0.9M981.6 161h0.9M982.6 161h0.9M983.6 161h0.9M984.6 161h0.9M985.6 161h0.9M986.6 161h0.9M987.6 161h0.9M988.6 161h0.9M989.6 161h0.9M990.6 161h0.9M991.6 161h0.9M992.6 161h0.9M993.6 161h0.9M994.6 161h0.9M995.6 161h0.9M996.6 161h0.9M966.6 199h0.9M968.6 199h0.9M969.6 199h0.9M970.6 199h0.9M971.6 199h0.9M972.6 199h0.9M973.6 199h0.9M974.6 199h0.9M975.6 199h0.9M976.6 199h0.9M977.6 199h0.9M978.6 199h0.9M979.6 199h0.9M980.6 199h0.9M981.6 199h0.9M982.6 199h0.9M983.6 199h0.9M984.6 199h0.9M985.6 199h0.9M986.6 199h0.9M987.6 199h0.9M966.6 219h0.9M968.6 219h0.9M969.6 219h0.9M970.6 219h0.9M971.6 219h0.9M972.6 219h0.9M973.6 219h0.9M974.6 219h0.9M975.6 219h0.9M976.6 219h0.9M977.6 219h0.9M978.6 219h0.9M979.6 219h0.9M980.6 219h0.9M981.6 219h0.9M982.6 219h0.9M983.6 219h0.9M984.6 219h0.9M985.6 219h0.9M986.6 219h0.9M987.6 219h0.9M966.6 229h0.9M968.6 229h0.9M969.6 229h0.9M970.6 229h0.9M971.6 229h0.9M972.6 229h0.9M973.6 229h0.9M974.6 229h0.9M975.6 229h0.9M976.6 229h0.9M977.6 229h0.9M978.6 229h0.9M979.6 229h0.9M980.6 229h0.9M981.6 229h0.9M982.6 229h0.9M983.6 229h0.9M984.6 229h0.9M985.6 229h0.9M986.6 229h0.9M987.6 229h0.9M988.6 229h0.9M989.6 229h0.9M966.6 231h0.9M968.6 231h0.9M969.6 231h0.9M970.6 231h0.9M971.6 231h0.9M974.6 231h0.9M978.6 231h0.9M979.6 231h0.9M982.6 231h0.9M986.6 231h0.9M987.6 231h0.9M990.6 231h0.9M991.6 231h0.9M992.6 231h0.9M993.6 231h0.9M994.6 231h0.9M995.6 231h0.9M996.6 231h0.9M997.6 231h0.9M998.6 231h0.9M999.6 231h0.9M1000.6 231h0.9M1001.6 231h0.9M1002.6 231h0.9M1003.6 231h0.9M1004.6 231h0.9M1005.6 231h0.9M1006.6 231h0.9M1007.6 231h0.9M1008.6 231h0.9M1009.6 231h0.9M982.6 235h0.9M984.6 235h0.9M985.6 235h0.9M986.6 235h0.9M987.6 235h0.9M988.6 235h0.9M989.6 235h0.9M990.6 235h0.9M991.6 235h0.9M993.6 235h0.9M994.6 235h0.9M995.6 235h0.9M996.6 235h0.9M997.6 235h0.9M999.6 235h0.9M1000.6 235h0.9M1001.6 235h0.9M1002.6 235h0.9M1003.6 235h0.9M1004.6 235h0.9M1005.6 235h0.9M1006.6 235h0.9M1007.6 235h0.9M1008.6 235h0.9M1009.6 235h0.9M1010.6 235h0.9M977.6 259h0.9M1002.6 265h0.9M1004.6 265h0.9M1005.6 265h0.9M1006.6 265h0.9M1007.6 265h0.9M1008.6 265h0.9M1009.6 265h0.9M1010.6 265h0.9M1011.6 265h0.9M1012.6 265h0.9M1013.6 265h0.9M1014.6 265h0.9M1015.6 265h0.9M1016.6 265h0.9M1017.6 265h0.9M1018.6 265h0.9M1019.6 265h0.9M1020.6 265h0.9M1021.6 265h0.9M1022.6 265h0.9" stroke="#61b061" stroke-width="1.7"/>
<path d="M979.6 117h0.9M981.6 131h0.9M986.6 139h0.9M986.6 143h0.9M979.6 157h0.9M995.6 205h0.9M981.6 207h0.9M980.6 211h0.9M979.6 235h0.9M984.6 251h0.9M984.6 255h0.9M984.6 257h0.9M984.6 261h0.9" stroke="#90c9b4" stroke-width="1.7"/>
<path d="M972.6 107h0.9M970.6 109h0.9M977.6 127h0.9M972.6 131h0.9M972.6 195h0.9M972.6 201h0.9M977.6 205h0.9M975.6 239h0.9M975.6 241h0.9" stroke="#66b497" stroke-width="1.7"/>
<path d="M979.6 97h0.9M984.6 97h0.9M987.6 97h0.9M992.6 97h0.9M995.6 97h0.9M1002.6 97h0.9M1008.6 97h0.9M977.6 113h0.9M996.6 115h0.9M979.6 131h0.9M1010.6 135h0.9M986.6 137h0.9M978.6 141h0.9M983.6 143h0.9M986.6 147h0.9M991.6 149h0.9M995.6 149h0.9M978.6 153h0.9M984.6 171h0.9M991.6 171h0.9M997.6 171h0.9M983.6 203h0.9M994.6 205h0.9M997.6 205h0.9M974.6 209h0.9M982.6 213h0.9M979.6 221h0.9M994.6 221h0.9M999.6 221h0.9M979.6 223h0.9M994.6 223h0.9M999.6 223h0.9M979.6 225h0.9M994.6 225h0.9M999.6 225h0.9M970.6 235h0.9M978.6 235h0.9M983.6 245h0.9M981.6 249h0.9M983.6 253h0.9M981.6 255h0.9M974.6 259h0.9M981.6 261h0.9M987.6 265h0.9M981.6 267h0.9M987.6 269h0.9M991.6 269h0.9M974.6 271h0.9M972.6 283h0.9M987.6 295h0.9" stroke="#cacaca" stroke-width="1.7"/>
<path d="M977.6 97h0.9M1000.6 97h0.9M1003.6 97h0.9M968.6 105h0.9M973.6 105h0.9M975.6 105h0.9M970.6 107h0.9M968.6 109h0.9M974.6 113h0.9M974.6 115h0.9M976.6 115h0.9M978.6 115h0.9M979.6 115h0.9M988.6 115h0.9M990.6 115h0.9M992.6 115h0.9M993.6 115h0.9M976.6 117h0.9M977.6 117h0.9M972.6 125h0.9M975.6 127h0.9M972.6 129h0.9M974.6 129h0.9M975.6 129h0.9M971.6 131h0.9M973.6 131h0.9M975.6 131h0.9M978.6 135h0.9M986.6 135h0.9M988.6 135h0.9M990.6 135h0.9M992.6 135h0.9M993.6 135h0.9M1001.6 135h0.9M1003.6 135h0.9M1005.6 135h0.9M1006.6 135h0.9M1009.6 135h0.9M978.6 137h0.9M980.6 137h0.9M982.6 137h0.9M983.6 137h0.9M983.6 139h0.9M984.6 139h0.9M984.6 143h0.9M982.6 149h0.9M987.6 149h0.9M998.6 149h0.9M1003.6 149h0.9M1004.6 149h0.9M979.6 155h0.9M984.6 155h0.9M986.6 155h0.9M976.6 157h0.9M977.6 157h0.9M972.6 161h0.9M982.6 171h0.9M989.6 171h0.9M992.6 171h0.9M968.6 193h0.9M973.6 193h0.9M975.6 193h0.9M970.6 195h0.9M970.6 201h0.9M980.6 203h0.9M982.6 203h0.9M975.6 205h0.9M984.6 205h0.9M986.6 205h0.9M988.6 205h0.9M989.6 205h0.9M992.6 205h0.9M996.6 205h0.9M978.6 207h0.9M979.6 207h0.9M978.6 211h0.9M977.6 213h0.9M978.6 215h0.9M970.6 221h0.9M975.6 221h0.9M992.6 221h0.9M1004.6 221h0.9M1005.6 221h0.9M970.6 223h0.9M975.6 223h0.9M992.6 223h0.9M1004.6 223h0.9M1005.6 223h0.9M970.6 225h0.9M975.6 225h0.9M992.6 225h0.9M1004.6 225h0.9M1005.6 225h0.9M968.6 233h0.9M970.6 233h0.9M971.6 233h0.9M967.6 235h0.9M968.6 235h0.9M973.6 235h0.9M974.6 235h0.9M976.6 235h0.9M973.6 239h0.9M973.6 241h0.9M980.6 245h0.9M982.6 245h0.9M972.6 247h0.9M975.6 247h0.9M977.6 247h0.9M975.6 249h0.9M976.6 249h0.9M981.6 251h0.9M982.6 251h0.9M977.6 253h0.9M978.6 253h0.9M982.6 255h0.9M981.6 257h0.9M982.6 257h0.9M982.6 261h0.9M974.6 265h0.9M976.6 265h0.9M984.6 265h0.9M996.6 265h0.9M999.6 265h0.9M978.6 269h0.9M983.6 269h0.9M994.6 269h0.9M998.6 269h0.9M999.6 269h0.9M975.6 273h0.9M979.6 273h0.9M981.6 273h0.9M970.6 283h0.9M971.6 283h0.9M968.6 285h0.9M973.6 287h0.9M991.6 287h0.9M993.6 287h0.9M971.6 289h0.9M978.6 289h0.9M974.6 295h0.9M975.6 295h0.9M970.6 297h0.9M971.6 297h0.9" stroke="#aaaaaa" stroke-width="1.7"/>
<path d="M982.6 97h0.9M983.6 97h0.9M990.6 97h0.9M991.6 97h0.9M998.6 97h0.9M999.6 97h0.9M1005.6 97h0.9M1007.6 97h0.9M987.6 171h0.9M988.6 171h0.9M994.6 171h0.9M996.6 171h0.9" stroke="#9dc5d1" stroke-width="1.7"/>
<path d="M981.6 97h0.9M989.6 97h0.9M997.6 97h0.9M1006.6 97h0.9M986.6 171h0.9M995.6 171h0.9" stroke="#78b0c0" stroke-width="1.7"/>
<path d="M973.6 97h0.9M973.6 171h0.9M988.6 221h0.9M988.6 223h0.9M988.6 225h0.9M982.6 287h0.9" stroke="#d9d2c2" stroke-width="1.7"/>
<path d="M966.6 97h0.9M972.6 97h0.9M974.6 97h0.9M970.6 105h0.9M966.6 171h0.9M972.6 171h0.9M976.6 171h0.9M979.6 171h0.9M970.6 193h0.9M975.6 203h0.9M981.6 221h0.9M987.6 221h0.9M989.6 221h0.9M981.6 223h0.9M987.6 223h0.9M989.6 223h0.9M981.6 225h0.9M987.6 225h0.9M989.6 225h0.9M975.6 245h0.9M968.6 283h0.9M975.6 287h0.9M981.6 287h0.9M985.6 287h0.9M988.6 287h0.9M967.6 289h0.9M968.6 289h0.9M970.6 289h0.9M968.6 297h0.9" stroke="#c3b79d" stroke-width="1.7"/>
<path d="M967.6 97h0.9M968.6 97h0.9M969.6 97h0.9M970.6 97h0.9M971.6 97h0.9M975.6 97h0.9M976.6 97h0.9M971.6 105h0.9M972.6 105h0.9M984.6 149h0.9M985.6 149h0.9M986.6 149h0.9M967.6 171h0.9M968.6 171h0.9M969.6 171h0.9M970.6 171h0.9M971.6 171h0.9M974.6 171h0.9M975.6 171h0.9M977.6 171h0.9M978.6 171h0.9M980.6 171h0.9M981.6 171h0.9M971.6 193h0.9M972.6 193h0.9M976.6 203h0.9M977.6 203h0.9M978.6 203h0.9M979.6 203h0.9M972.6 221h0.9M973.6 221h0.9M974.6 221h0.9M982.6 221h0.9M983.6 221h0.9M984.6 221h0.9M985.6 221h0.9M986.6 221h0.9M990.6 221h0.9M991.6 221h0.9M972.6 223h0.9M973.6 223h0.9M974.6 223h0.9M982.6 223h0.9M983.6 223h0.9M984.6 223h0.9M985.6 223h0.9M986.6 223h0.9M990.6 223h0.9M991.6 223h0.9M972.6 225h0.9M973.6 225h0.9M974.6 225h0.9M982.6 225h0.9M983.6 225h0.9M984.6 225h0.9M985.6 225h0.9M986.6 225h0.9M990.6 225h0.9M991.6 225h0.9M976.6 245h0.9M977.6 245h0.9M978.6 245h0.9M979.6 245h0.9M980.6 269h0.9M981.6 269h0.9M982.6 269h0.9M966.6 283h0.9M967.6 283h0.9M969.6 283h0.9M976.6 287h0.9M977.6 287h0.9M978.6 287h0.9M979.6 287h0.9M980.6 287h0.9M983.6 287h0.9M984.6 287h0.9M986.6 287h0.9M987.6 287h0.9M989.6 287h0.9M990.6 287h0.9M966.6 289h0.9M969.6 289h0.9M966.6 297h0.9M967.6 297h0.9M969.6 297h0.9" stroke="#ac9b78" stroke-width="1.7"/>
<path d="M966.6 101h0.9M967.6 101h0.9M968.6 101h0.9M981.6 101h0.9M982.6 101h0.9M983.6 101h0.9M966.6 175h0.9M967.6 175h0.9M968.6 175h0.9M998.6 177h0.9M970.6 181h0.9M971.6 183h0.9M978.6 183h0.9M980.6 183h0.9M982.6 183h0.9M984.6 183h0.9M986.6 183h0.9M988.6 183h0.9M1002.6 183h0.9M973.6 187h0.9M966.6 191h0.9M967.6 191h0.9M968.6 191h0.9M996.6 221h0.9M998.6 221h0.9M1001.6 221h0.9M1003.6 221h0.9M996.6 223h0.9M998.6 223h0.9M1001.6 223h0.9M1003.6 223h0.9M996.6 225h0.9M998.6 225h0.9M1001.6 225h0.9M1003.6 225h0.9M978.6 249h0.9M980.6 249h0.9M980.6 253h0.9M982.6 253h0.9M970.6 285h0.9M976.6 285h0.9M977.6 295h0.9M978.6 295h0.9M979.6 295h0.9M984.6 295h0.9M985.6 295h0.9M986.6 295h0.9" stroke="#e5bdbd" stroke-width="1.7"/>
<path d="M1009.6 177h0.9M967.6 181h0.9M987.6 183h0.9M968.6 187h0.9M970.6 187h0.9M1002.6 223h0.9M1002.6 225h0.9M975.6 285h0.9M982.6 295h0.9" stroke="#d69696" stroke-width="1.7"/>
<path d="M969.6 101h0.9M970.6 101h0.9M971.6 101h0.9M972.6 101h0.9M973.6 101h0.9M974.6 101h0.9M975.6 101h0.9M976.6 101h0.9M977.6 101h0.9M978.6 101h0.9M979.6 101h0.9M980.6 101h0.9M969.6 175h0.9M970.6 175h0.9M971.6 175h0.9M972.6 175h0.9M973.6 175h0.9M974.6 175h0.9M975.6 175h0.9M976.6 175h0.9M977.6 175h0.9M978.6 175h0.9M979.6 175h0.9M980.6 175h0.9M981.6 175h0.9M982.6 175h0.9M983.6 175h0.9M984.6 175h0.9M985.6 175h0.9M986.6 175h0.9M987.6 175h0.9M988.6 175h0.9M989.6 175h0.9M990.6 175h0.9M966.6 177h0.9M967.6 177h0.9M968.6 177h0.9M969.6 177h0.9M970.6 177h0.9M971.6 177h0.9M972.6 177h0.9M973.6 177h0.9M974.6 177h0.9M975.6 177h0.9M976.6 177h0.9M977.6 177h0.9M978.6 177h0.9M979.6 177h0.9M980.6 177h0.9M981.6 177h0.9M982.6 177h0.9M983.6 177h0.9M984.6 177h0.9M985.6 177h0.9M986.6 177h0.9M987.6 177h0.9M988.6 177h0.9M989.6 177h0.9M990.6 177h0.9M991.6 177h0.9M992.6 177h0.9M993.6 177h0.9M994.6 177h0.9M995.6 177h0.9M996.6 177h0.9M997.6 177h0.9M1000.6 177h0.9M1001.6 177h0.9M1002.6 177h0.9M1003.6 177h0.9M1005.6 177h0.9M1007.6 177h0.9M966.6 181h0.9M968.6 181h0.9M969.6 181h0.9M970.6 183h0.9M973.6 183h0.9M974.6 183h0.9M975.6 183h0.9M976.6 183h0.9M979.6 183h0.9M983.6 183h0.9M990.6 183h0.9M991.6 183h0.9M992.6 183h0.9M993.6 183h0.9M994.6 183h0.9M995.6 183h0.9M996.6 183h0.9M997.6 183h0.9M998.6 183h0.9M999.6 183h0.9M1000.6 183h0.9M1001.6 183h0.9M1004.6 183h0.9M1005.6 183h0.9M1006.6 183h0.9M1007.6 183h0.9M1009.6 183h0.9M966.6 187h0.9M967.6 187h0.9M969.6 187h0.9M971.6 187h0.9M972.6 187h0.9M970.6 189h0.9M971.6 189h0.9M972.6 189h0.9M973.6 189h0.9M974.6 189h0.9M975.6 189h0.9M976.6 189h0.9M977.6 189h0.9M978.6 189h0.9M979.6 189h0.9M980.6 189h0.9M981.6 189h0.9M982.6 189h0.9M983.6 189h0.9M984.6 189h0.9M985.6 189h0.9M986.6 189h0.9M987.6 189h0.9M997.6 221h0.9M1002.6 221h0.9M997.6 223h0.9M997.6 225h0.9M979.6 249h0.9M981.6 253h0.9M971.6 285h0.9M972.6 285h0.9M973.6 285h0.9M974.6 285h0.9M980.6 295h0.9M981.6 295h0.9M983.6 295h0.9" stroke="#c66e6e" stroke-width="1.7"/>
<path d="M968.6 113h0.9M969.6 113h0.9M970.6 115h0.9M971.6 115h0.9M974.6 119h0.9M977.6 119h0.9M978.6 119h0.9M972.6 135h0.9M973.6 135h0.9M998.6 135h0.9M974.6 137h0.9M975.6 137h0.9M975.6 141h0.9M974.6 147h0.9M975.6 147h0.9M982.6 147h0.9M975.6 153h0.9M966.6 165h0.9M968.6 165h0.9M970.6 165h0.9M966.6 203h0.9M968.6 203h0.9M972.6 203h0.9M970.6 205h0.9M971.6 205h0.9M971.6 209h0.9M970.6 213h0.9M971.6 213h0.9M966.6 245h0.9M968.6 245h0.9M972.6 245h0.9M970.6 249h0.9M971.6 249h0.9M971.6 253h0.9M972.6 253h0.9M973.6 253h0.9M971.6 259h0.9M970.6 267h0.9M971.6 267h0.9M977.6 267h0.9M971.6 271h0.9M966.6 277h0.9M968.6 277h0.9M970.6 277h0.9M962.6 295h0.9M963.6 295h0.9" stroke="#db8cef" stroke-width="1.7"/>
<path d="M966.6 113h0.9M967.6 113h0.9M970.6 113h0.9M983.6 115h0.9M984.6 115h0.9M985.6 115h0.9M975.6 119h0.9M976.6 119h0.9M979.6 119h0.9M980.6 119h0.9M981.6 119h0.9M970.6 135h0.9M971.6 135h0.9M974.6 135h0.9M982.6 135h0.9M983.6 135h0.9M984.6 135h0.9M997.6 135h0.9M974.6 141h0.9M976.6 141h0.9M977.6 141h0.9M983.6 147h0.9M974.6 153h0.9M976.6 153h0.9M977.6 153h0.9M967.6 165h0.9M969.6 165h0.9M971.6 165h0.9M967.6 203h0.9M973.6 203h0.9M979.6 205h0.9M980.6 205h0.9M981.6 205h0.9M970.6 209h0.9M972.6 209h0.9M973.6 209h0.9M967.6 245h0.9M973.6 245h0.9M970.6 253h0.9M970.6 259h0.9M972.6 259h0.9M973.6 259h0.9M978.6 267h0.9M970.6 271h0.9M972.6 271h0.9M973.6 271h0.9M967.6 277h0.9M969.6 277h0.9M971.6 277h0.9" stroke="#cd61e9" stroke-width="1.7"/>
</svg>
<div class="abs" style="left:1043px;top:92px;width:14px;height:462px;border-left:1px solid #e6e6e6"></div>
<div class="abs" style="left:1043px;top:389px;width:14px;height:86.5px;background:#c2c2c2"></div>
<div class="abs" style="left:1043px;top:433.5px;width:14px;height:2px;background:#555"></div>
<div id="panel" class="abs"></div>
<span class="tx" style="left:269.71px;top:565.00px;font-size:10.8px;line-height:16px;letter-spacing:-0.748px;color:#616161;">PROBLEMS</span>
<span class="tx" style="left:371.29px;top:565.00px;font-size:10.8px;line-height:16px;letter-spacing:-0.548px;color:#616161;">OUTPUT</span>
<span class="tx" style="left:437.61px;top:565.00px;font-size:10.8px;line-height:16px;letter-spacing:-0.423px;color:#616161;">DEBUG CONSOLE</span>
<span class="tx" style="left:550.76px;top:565.00px;font-size:10.8px;line-height:16px;letter-spacing:-0.429px;color:#333;">TERMINAL</span>
<span class="tx" style="left:626.51px;top:565.00px;font-size:10.8px;line-height:16px;letter-spacing:-0.731px;color:#616161;">PORTS</span>
<div class="abs" style="left:549.5px;top:583px;width:55px;height:1px;background:#424242"></div>
<div class="abs" style="left:329px;top:564px;width:20px;height:16px;border-radius:8px;background:#0078d0"></div>
<span class="tx" style="left:334.28px;top:565.00px;font-size:9.5px;line-height:16px;letter-spacing:-0.779px;color:#fff;">11</span>
<div class="tl" style="top:591.7px">PS D:\mysetup\gopath\src\sf2\aa\lc&gt; <span style="color:#8f9400">python</span> main.py</div>
<div class="tl" style="top:608.7px">4</div>
<div class="tl" style="top:625.7px">PS D:\mysetup\gopath\src\sf2\aa\lc&gt; </div>
<div class="abs" style="left:558px;top:626px;width:9px;height:16px;border:1px solid #444"></div>
<div class="dot" style="left:257px;top:629.1px"></div>
<div class="dot" style="left:257px;top:663px"></div>
<div class="dot" style="left:257px;top:697px"></div>
<div class="dot" style="left:257px;top:765px"></div>
<div class="red" style="left:253px;top:600px;width:38px;height:27.4px;border-radius:5px"></div>
<div class="abs" style="left:842px;top:591px;width:14px;height:187px;border:1px solid #dcdcdc;border-bottom:none"></div>
<div class="mark" style="top:642px"></div>
<div class="mark" style="top:671px"></div>
<div class="mark" style="top:699px"></div>
<div class="mark" style="top:757px"></div>
<div class="abs" style="left:856px;top:611px;width:201px;height:22px;background:#e4e6f1"></div>
<span class="tx" style="left:885.84px;top:593.00px;font-size:13.3px;line-height:16px;letter-spacing:-0.015px;color:#424242;">powershell</span>
<span class="tx" style="left:885.84px;top:615.00px;font-size:13.3px;line-height:16px;letter-spacing:-0.015px;color:#424242;">powershell</span>
<span class="tx" style="left:954.73px;top:615.00px;font-size:11.5px;line-height:16px;letter-spacing:0.373px;color:#6a6a6a;">lc</span>
<svg style="left:0;top:554px" width="1057" height="100" viewBox="0 554 1057 100" fill="none">
<path d="M924.2 572.6H934.8M929.5 567.4V577.8" stroke="#424242" stroke-width="1.1"/>
<path d="M942 571.2 946.1 575.2 950.2 571.2" stroke="#424242" stroke-width="1"/>
<path d="M988.5 565.4V580.4" stroke="#c6c6c6" stroke-width="1"/>
<path d="M1002.5 569.6V568Q1002.5 566.8 1003.7 566.8H1005.6M1010.4 566.8H1012.3Q1013.5 566.8 1013.5 568V569.6M1013.5 574.2V575.8Q1013.5 577 1012.3 577H1010.4M1005.6 577H1003.7Q1002.5 577 1002.5 575.8V574.2" stroke="#424242" stroke-width="1.1"/>
<path d="M1030 568 1038 576M1038 568 1030 576" stroke="#424242" stroke-width="1"/>
<rect x="867.6" y="593.7" width="12.6" height="12.6" rx="1.8" stroke="#424242" stroke-width="1"/>
<path d="M869.4 596.9 873 600.3 869.4 603.7M874 603.9H879" stroke="#424242" stroke-width="1"/>
<rect x="867.6" y="615.6" width="12.6" height="12.6" rx="1.8" stroke="#424242" stroke-width="1"/>
<path d="M869.4 618.8 873 622.1999999999999 869.4 625.6M874 625.8H879" stroke="#424242" stroke-width="1"/>
</svg>
<div class="abs" style="left:963.60px;top:572.00px;width:2.0px;height:2.0px;border-radius:50%;background:#424242"></div><div class="abs" style="left:967.85px;top:572.00px;width:2.0px;height:2.0px;border-radius:50%;background:#424242"></div><div class="abs" style="left:972.10px;top:572.00px;width:2.0px;height:2.0px;border-radius:50%;background:#424242"></div>
<div id="status" class="abs"></div>
<div class="abs" style="left:756px;top:778px;width:91.5px;height:22px;background:#04436f"></div>
<span class="tx" style="left:59.26px;top:781.00px;font-size:12px;line-height:16px;letter-spacing:-0.067px;color:#fff;">vite</span>
<span class="tx" style="left:113.29px;top:781.00px;font-size:12px;line-height:16px;letter-spacing:-2.248px;color:#fff;">11</span>
<span class="tx" style="left:147.33px;top:781.00px;font-size:12px;line-height:16px;color:#fff;">0</span>
<span class="tx" style="left:456.62px;top:781.00px;font-size:12px;line-height:16px;letter-spacing:-0.376px;color:#fff;">Ln 95, Col 1</span>
<span class="tx" style="left:534.26px;top:781.00px;font-size:12px;line-height:16px;letter-spacing:-0.621px;color:#fff;">Spaces: 4</span>
<span class="tx" style="left:597.37px;top:781.00px;font-size:12px;line-height:16px;letter-spacing:-0.262px;color:#fff;">UTF-8</span>
<span class="tx" style="left:645.29px;top:781.00px;font-size:12px;line-height:16px;letter-spacing:-1.515px;color:#fff;">CRLF</span>
<span class="tx" style="left:689.60px;top:781.00px;font-size:12px;line-height:16px;letter-spacing:1.033px;color:#fff;">{ }</span>
<span class="tx" style="left:709.42px;top:781.00px;font-size:12px;line-height:16px;letter-spacing:0.381px;color:#fff;">Python</span>
<span class="tx" style="left:783.56px;top:781.00px;font-size:12px;line-height:16px;letter-spacing:-0.139px;color:#fff;">Signed out</span>
<span class="tx" style="left:855.94px;top:781.00px;font-size:12px;line-height:16px;letter-spacing:-0.749px;color:#fff;">3.12.11</span>
<span class="tx" style="left:907.62px;top:781.00px;font-size:12px;line-height:16px;letter-spacing:-0.320px;color:#fff;">Python 3.12.11</span>
<svg style="left:0;top:778px" width="1057" height="22" viewBox="0 778 1057 22" fill="none" stroke="#fff" stroke-linejoin="round">
<path d="M12.2 787.6 15.9 790.8 12.2 794.8M20.4 784.2 16.4 788 20.4 791.2" stroke-width="1.1"/>
<path d="M43.3 784.2V794.6L53.4 789.4Z" stroke-width="1.1"/>
<circle cx="102.1" cy="789" r="5.7" stroke-width="1.1"/><path d="M99.7 786.6 104.5 791.4M104.5 786.6 99.7 791.4" stroke-width="1.1"/>
<path d="M136.3 784.3 142 793.2H130.6Z" stroke-width="1.1"/><path d="M136.3 787.2V790.4M136.3 791.2V792.2" stroke-width="1"/>
<path d="M766.6 783H769.4Q771 783 771 784.6V786Q771 787.6 769.4 787.6H766.6Q765.4 787.6 765.4 786V784.6Q765.4 783 766.6 783ZM774 783H776.8Q778 783 778 784.6V786Q778 787.6 776.8 787.6H774Q772.6 787.6 772.6 786V784.6Q772.6 783 774 783Z" stroke-width="1.7"/>
<path d="M765.4 786.4Q764.2 787.4 764.2 789.4V792Q766.6 794.6 770.6 795M778.4 786.4Q779.4 787.2 779.6 788.4" stroke-width="1.6"/>
<circle cx="775.6" cy="792.3" r="3.9" stroke-width="1.3" fill="#04436f"/><path d="M774.1 790.8 777.1 793.8M777.1 790.8 774.1 793.8" stroke-width="1.2"/>
<g transform="translate(1008.9 790.2) scale(0.667) translate(-24 -395)" stroke="none">
<path d="M19.5 382.9H25.5L26.8 385.3H33.2L35.2 389 33.6 392 36 397.2 33 402H30.5L27.5 407.3H23L21.5 404.5H15.5L13.5 400.6 15 397.6 12 392.5 14.5 388H16.8Z" fill="#fff"/>
<path d="M20.3 390.3H32.7M16.1 390 23.7 404.2M30.1 393.3 24.6 403.8" stroke="#007acc" stroke-width="2"/>
<path d="M18.2 385.2 20.8 387.6M31.8 394.2 34.2 397M17.4 401.8H21.6" stroke="#007acc" stroke-width="1.3"/>
</g>
<path d="M1041.6 783.6Q1037.2 783.8 1037.2 788.4V791L1036 792.8H1045.8L1044.6 791V789" stroke-width="1.1"/><path d="M1039.8 793.2Q1040.9 795 1042 793.2" stroke-width="1"/><circle cx="1044.6" cy="785.4" r="2.6" fill="#fff" stroke="none"/>
</svg>
<div id="wm" style="left:622px;top:748.9px;font-size:22px;letter-spacing:1.55px;word-spacing:-1.4px;line-height:32px">掘金技术社区 @ 福大大架构师每日一题</div>
</body>
</html>
